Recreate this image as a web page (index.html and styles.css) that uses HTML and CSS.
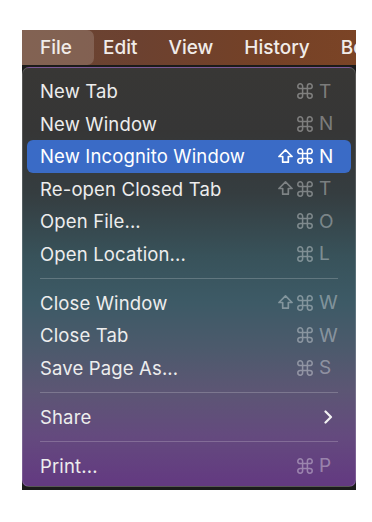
FILE: index.html
```html
<!DOCTYPE html>
<html>
<head>
<meta charset="utf-8">
<link rel="stylesheet" href="styles.css">
</head>
<body>
<div class="screen">
  <div class="menubar">
    <span class="bar-item active">File</span>
    <span class="bar-item">Edit</span>
    <span class="bar-item">View</span>
    <span class="bar-item">History</span>
    <span class="bar-item">Bookmarks</span>
  </div>
  <div class="dropdown">
    <div class="row"><span class="label">New Tab</span><span class="keys"><span class="mod"></span><span class="mod"><svg class="cmd" viewBox="2 2 20 20"><path d="M15 6v12a3 3 0 1 0 3-3H6a3 3 0 1 0 3 3V6a3 3 0 1 0-3 3h12a3 3 0 1 0-3-3"/></svg></span><span class="key">T</span></span></div>
    <div class="row"><span class="label">New Window</span><span class="keys"><span class="mod"></span><span class="mod"><svg class="cmd" viewBox="2 2 20 20"><path d="M15 6v12a3 3 0 1 0 3-3H6a3 3 0 1 0 3 3V6a3 3 0 1 0-3 3h12a3 3 0 1 0-3-3"/></svg></span><span class="key">N</span></span></div>
    <div class="row selected"><span class="label">New Incognito Window</span><span class="keys"><span class="mod"><svg class="shift" viewBox="4 4 16 16"><path d="M9 18v-6H5l7-7 7 7h-4v6H9z"/></svg></span><span class="mod"><svg class="cmd" viewBox="2 2 20 20"><path d="M15 6v12a3 3 0 1 0 3-3H6a3 3 0 1 0 3 3V6a3 3 0 1 0-3 3h12a3 3 0 1 0-3-3"/></svg></span><span class="key">N</span></span></div>
    <div class="row"><span class="label">Re-open Closed Tab</span><span class="keys"><span class="mod"><svg class="shift" viewBox="4 4 16 16"><path d="M9 18v-6H5l7-7 7 7h-4v6H9z"/></svg></span><span class="mod"><svg class="cmd" viewBox="2 2 20 20"><path d="M15 6v12a3 3 0 1 0 3-3H6a3 3 0 1 0 3 3V6a3 3 0 1 0-3 3h12a3 3 0 1 0-3-3"/></svg></span><span class="key">T</span></span></div>
    <div class="row"><span class="label">Open File...</span><span class="keys"><span class="mod"></span><span class="mod"><svg class="cmd" viewBox="2 2 20 20"><path d="M15 6v12a3 3 0 1 0 3-3H6a3 3 0 1 0 3 3V6a3 3 0 1 0-3 3h12a3 3 0 1 0-3-3"/></svg></span><span class="key">O</span></span></div>
    <div class="row"><span class="label">Open Location...</span><span class="keys"><span class="mod"></span><span class="mod"><svg class="cmd" viewBox="2 2 20 20"><path d="M15 6v12a3 3 0 1 0 3-3H6a3 3 0 1 0 3 3V6a3 3 0 1 0-3 3h12a3 3 0 1 0-3-3"/></svg></span><span class="key">L</span></span></div>
    <div class="sep"></div>
    <div class="row"><span class="label">Close Window</span><span class="keys"><span class="mod"><svg class="shift" viewBox="4 4 16 16"><path d="M9 18v-6H5l7-7 7 7h-4v6H9z"/></svg></span><span class="mod"><svg class="cmd" viewBox="2 2 20 20"><path d="M15 6v12a3 3 0 1 0 3-3H6a3 3 0 1 0 3 3V6a3 3 0 1 0-3 3h12a3 3 0 1 0-3-3"/></svg></span><span class="key">W</span></span></div>
    <div class="row"><span class="label">Close Tab</span><span class="keys"><span class="mod"></span><span class="mod"><svg class="cmd" viewBox="2 2 20 20"><path d="M15 6v12a3 3 0 1 0 3-3H6a3 3 0 1 0 3 3V6a3 3 0 1 0-3 3h12a3 3 0 1 0-3-3"/></svg></span><span class="key">W</span></span></div>
    <div class="row"><span class="label">Save Page As...</span><span class="keys"><span class="mod"></span><span class="mod"><svg class="cmd" viewBox="2 2 20 20"><path d="M15 6v12a3 3 0 1 0 3-3H6a3 3 0 1 0 3 3V6a3 3 0 1 0-3 3h12a3 3 0 1 0-3-3"/></svg></span><span class="key">S</span></span></div>
    <div class="sep"></div>
    <div class="row"><span class="label">Share</span><span class="submenu"><svg class="chev" viewBox="0 0 9 14"><path d="M1.5 1.5L7 7l-5.5 5.5"/></svg></span></div>
    <div class="sep"></div>
    <div class="row"><span class="label">Print...</span><span class="keys"><span class="mod"></span><span class="mod"><svg class="cmd" viewBox="2 2 20 20"><path d="M15 6v12a3 3 0 1 0 3-3H6a3 3 0 1 0 3 3V6a3 3 0 1 0-3 3h12a3 3 0 1 0-3-3"/></svg></span><span class="key">P</span></span></div>
  </div>
</div>
</body>
</html>
```
FILE: styles.css
```css
* { box-sizing: border-box; }
html, body { margin: 0; padding: 0; background: #ffffff; }
body { font-family: "Inter", "Noto Sans", sans-serif; }

.screen {
  margin: 30px 0 0 22px;
  width: 334px;
  height: 460px;
  background: #1b1b1b;
  display: flex;
  flex-direction: column;
  overflow: hidden;
}

.menubar {
  height: 35px;
  flex: none;
  display: flex;
  align-items: stretch;
  white-space: nowrap;
  overflow: hidden;
  background: linear-gradient(90deg, #6a4533 0%, #6c4130 35%, #744127 70%, #7b4426 100%);
  color: #f1ece9;
  font-size: 19px;
  font-weight: 500;
}
.bar-item {
  display: flex;
  align-items: center;
  margin-right: 31px;
}
.bar-item.active {
  padding: 0 22px 0 18px;
  margin-right: 9px;
  background: rgba(255, 255, 255, 0.16);
  border-radius: 0 7px 7px 0;
}

.dropdown {
  margin-top: 2px;
  height: 420px;
  flex: none;
  border: 1px solid rgba(255, 255, 255, 0.16);
  border-radius: 7px;
  padding: 7px 4px 6px;
  background:
    linear-gradient(180deg,
      #383735 0%,
      #363636 15%,
      #353d40 30%,
      #38525a 45%,
      #3d5a66 56%,
      #4c5a6c 67%,
      #5c5674 77%,
      #644a7e 88%,
      #633981 100%);
  color: #ededed;
  font-size: 18.5px;
  letter-spacing: 0.15px;
}

.row {
  height: 32.5px;
  display: flex;
  align-items: center;
  justify-content: space-between;
  padding: 0 17px 0 13px;
  border-radius: 6px;
}
.row.selected {
  background: #3a6bc6;
  color: #ffffff;
}

.keys {
  display: flex;
  align-items: center;
  color: rgba(255, 255, 255, 0.36);
  font-size: 19px;
}
.row.selected .keys { color: #ffffff; }

.mod {
  width: 16px;
  height: 16px;
  margin-right: 4px;
  display: flex;
  align-items: center;
  justify-content: center;
}
.cmd, .shift {
  width: 16px;
  height: 16px;
  fill: none;
  stroke: currentColor;
  stroke-width: 1.9;
  stroke-linejoin: round;
  stroke-linecap: round;
}
.shift { width: 15px; height: 15px; stroke-width: 1.8; }
.key {
  width: 15px;
  margin-left: 2px;
  text-align: left;
  line-height: 1;
}

.submenu {
  display: flex;
  align-items: center;
  padding-right: 1px;
}
.chev {
  width: 9px;
  height: 14px;
  fill: none;
  stroke: #f2f2f2;
  stroke-width: 2.2;
  stroke-linecap: round;
  stroke-linejoin: round;
}

.sep {
  height: 1px;
  margin: 7.5px 13px 8px;
  background: rgba(255, 255, 255, 0.2);
}
```
